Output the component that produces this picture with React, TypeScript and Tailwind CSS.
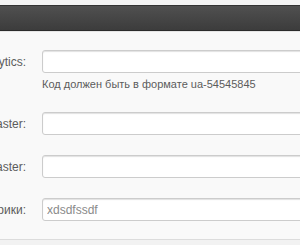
import React from "react"

const rows = [
  { label: "Google Analytics:", value: "", help: "Код должен быть в формате ua-54545845" },
  { label: "Google Webmaster:", value: "" },
  { label: "Yandex Webmaster:", value: "" },
  { label: "Код Яндекс.Метрики:", value: "xdsdfssdf" },
]

function Field({ label, value, help }: { label: string; value: string; help?: string }) {
  return (
    <div className="flex gap-[16px]">
      <div className="w-[26px] shrink-0 flex justify-end h-[23px] items-center">
        <span className="whitespace-nowrap text-[12px] text-[#5c5c5c]">{label}</span>
      </div>
      <div className="flex flex-col">
        <input
          readOnly
          value={value}
          className="w-[280px] h-[23px] px-[4px] bg-white border border-[#ccc] rounded-[3px] shadow-[inset_0_1px_1px_rgba(0,0,0,0.12)] text-[12px] text-[#8a8a8a] outline-none"
        />
        {help && <p className="mt-[4px] leading-[15px] text-[11px] text-[#5c5c5c]">{help}</p>}
      </div>
    </div>
  )
}

export default function App() {
  return (
    <div className="w-[300px] h-[245px] overflow-hidden bg-[#f4f4f4] font-['Liberation_Sans',Arial,sans-serif]">
      <div className="h-[5px] bg-[#f4f4f4]" />
      <div className="h-[26px] bg-gradient-to-b from-[#505050] to-[#3c3c3c] border-t border-[#333] border-b border-b-[#2b2b2b]" />
      <div className="bg-[#f9f9f9] border-t border-[#e6e6e6] pt-[18px] pb-[18px] flex flex-col gap-[20px]">
        {rows.map((r) => (
          <Field key={r.label} label={r.label} value={r.value} help={r.help} />
        ))}
      </div>
      <div className="h-[10px] bg-[#f2f2f2] border-t border-[#dcdcdc]" />
    </div>
  )
}
